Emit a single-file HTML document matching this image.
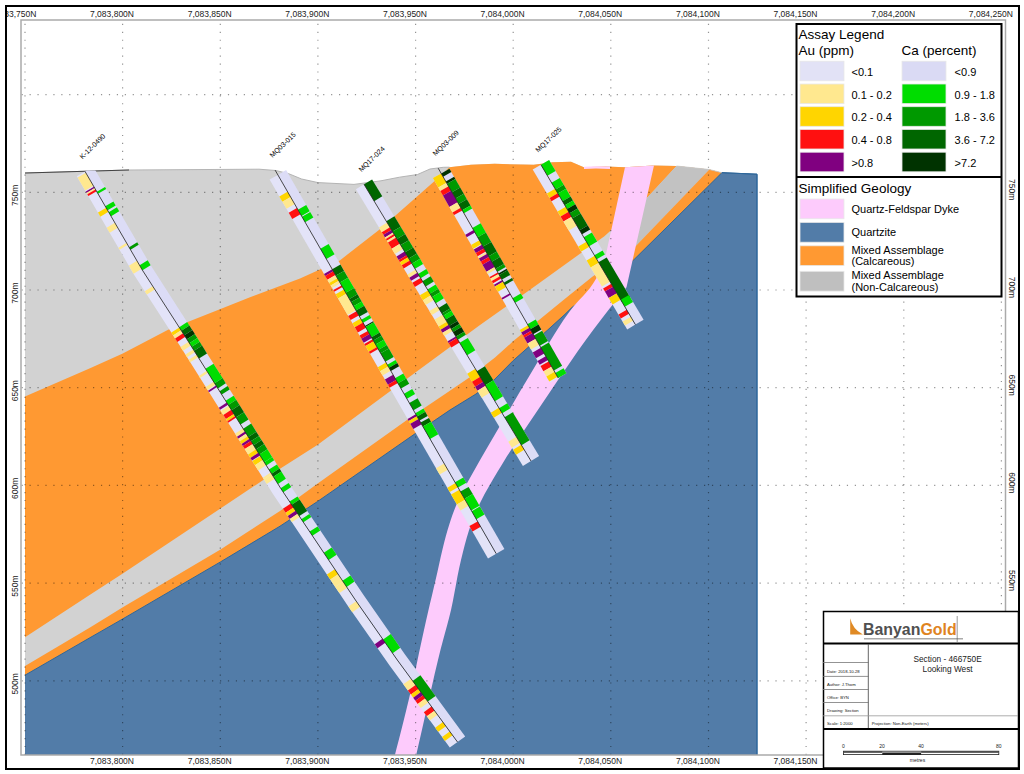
<!DOCTYPE html><html><head><meta charset="utf-8"><style>html,body{margin:0;padding:0;background:#fff;width:1024px;height:774px;overflow:hidden}svg{display:block}text{font-family:"Liberation Sans", sans-serif}</style></head><body>
<svg width="1024" height="774" viewBox="0 0 1024 774">
<rect width="1024" height="774" fill="#fff"/>
<polygon points="25.0,173.0 129.0,170.0 259.0,169.2 275.8,170.5 288.7,173.7 301.6,179.0 318.0,182.6 354.0,184.4 381.0,180.8 399.5,177.2 417.5,174.5 430.0,169.0 443.3,167.3 449.4,167.2 471.0,164.8 494.7,163.8 533.8,164.8 552.5,162.2 571.0,161.7 583.8,167.2 605.5,166.4 625.0,167.2 653.0,165.6 676.5,166.0 709.4,169.5 721.9,172.7 757.0,174.2 757.0,755.0 25.0,755.0" fill="#d2d2d2"/>
<polygon points="25.0,396.5 90.0,368.3 122.8,353.4 168.1,329.7 220.5,308.9 250.0,297.2 300.0,278.4 339.8,260.4 379.6,229.6 433.8,181.7 449.4,167.2 471.0,164.8 494.7,163.8 533.8,164.8 552.5,162.2 571.0,161.7 583.8,167.2 605.5,166.4 625.0,167.2 653.0,165.6 676.5,166.0 709.4,169.5 721.9,172.7 757.0,174.2 757.0,755.0 25.0,755.0" fill="#ff9932"/>
<polygon points="25.0,637.2 90.0,594.7 122.8,573.6 280.0,468.8 317.7,444.8 415.4,372.6 480.0,325.0 530.0,289.7 604.4,236.2 647.8,197.0 676.5,166.0 709.4,169.5 721.9,172.7 757.0,174.2 757.0,755.0 25.0,755.0" fill="#d2d2d2"/>
<polygon points="635.0,205.0 647.8,197.0 676.5,166.0 709.4,169.5 636.1,245.8 625.0,250.0" fill="#c2c2c2"/>
<polygon points="25.0,666.1 90.0,627.5 122.8,607.2 220.5,549.4 280.0,511.0 317.7,483.6 415.4,414.0 443.6,395.0 469.0,377.7 495.0,357.6 513.3,341.1 539.0,320.0 565.0,298.8 592.0,277.0 636.1,245.8 709.4,169.5 721.9,172.7 757.0,174.2 757.0,755.0 25.0,755.0" fill="#ff9932"/>
<polygon points="25.0,675.2 90.0,637.7 122.8,618.9 220.5,561.9 280.0,526.2 317.7,501.4 415.4,433.5 450.0,410.0 476.0,394.0 494.0,380.0 513.3,360.5 529.1,346.5 547.7,330.0 565.0,314.3 571.9,307.5 632.7,260.9 721.9,172.7 757.0,174.2 757.0,755.0 25.0,755.0" fill="#527ca8"/>
<polyline points="25.0,675.2 90.0,637.7 122.8,618.9 220.5,561.9 280.0,526.2 317.7,501.4 415.4,433.5 450.0,410.0 476.0,394.0 494.0,380.0 513.3,360.5 529.1,346.5 547.7,330.0 565.0,314.3 571.9,307.5 632.7,260.9 721.9,172.7 757.0,174.2 757.0,755.0" fill="none" stroke="#2d679c" stroke-width="1"/>
<polygon points="625.0,167.2 603.4,266.0 603.4,266.0 602.1,268.3 600.4,271.3 598.4,275.0 595.9,279.1 593.1,283.5 590.0,288.0 586.6,292.1 583.1,295.9 579.2,299.9 574.7,304.9 569.6,311.4 563.5,320.0 556.1,331.5 547.5,345.4 538.2,360.9 528.7,377.0 519.4,392.6 511.0,406.9 503.1,420.4 495.2,433.9 487.6,447.0 480.5,459.2 474.3,470.2 469.1,479.4 465.2,486.4 462.6,491.3 460.7,494.9 459.2,498.0 457.9,501.2 456.2,505.3 454.3,510.0 452.5,514.8 450.8,519.7 449.2,524.8 447.5,530.3 445.8,536.3 444.1,542.8 442.4,549.8 440.7,557.1 439.0,564.7 437.3,572.4 435.5,580.2 433.7,587.9 431.9,595.7 430.0,603.5 428.1,611.8 426.1,620.5 424.0,630.0 421.7,640.5 419.2,652.0 416.7,664.0 414.1,676.1 411.5,687.8 409.0,698.8 406.4,709.5 403.7,720.5 401.0,731.2 398.5,740.9 396.4,749.0 394.9,755.0 416.2,755.0 418.7,744.1 422.2,728.7 426.3,710.6 430.6,691.9 434.6,674.3 438.0,660.0 440.7,649.1 443.1,640.0 445.2,632.2 447.2,625.0 449.1,617.8 451.0,610.0 452.8,601.6 454.4,593.1 456.0,584.6 457.5,576.3 459.2,568.0 461.0,560.0 462.9,552.3 464.8,544.8 466.8,537.4 469.0,530.2 471.5,522.9 474.3,515.6 477.5,508.3 480.9,501.2 484.6,494.1 488.6,486.9 492.9,479.5 497.5,471.7 502.3,463.9 507.1,456.1 512.3,448.1 518.0,439.6 524.2,430.3 531.1,420.0 539.2,408.0 548.3,394.4 558.0,380.1 567.8,365.7 577.2,352.1 585.8,340.0 593.9,329.0 601.9,318.4 609.6,308.6 616.5,299.9 622.2,292.6 626.5,287.2 654.0,165.6" fill="#fdcbfc"/>
<polyline points="25.0,173.0 129.0,170.0 259.0,169.2 275.8,170.5 288.7,173.7 301.6,179.0 318.0,182.6 354.0,184.4 381.0,180.8 399.5,177.2 417.5,174.5 430.0,169.0 443.3,167.3 449.4,167.2" fill="none" stroke="#b4b4b4" stroke-width="1"/>
<polyline points="676.5,166.0 709.4,169.5 721.9,172.7" fill="none" stroke="#c8c8c8" stroke-width="0.8"/>
<polyline points="721.9,172.7 757,174.2 757,755" fill="none" stroke="#2d679c" stroke-width="1"/>
<polygon points="584,166.8 596,166.2 610,166.6 610,169 596,168.6 584,169" fill="#ffd2fb"/>
<line x1="25.0" y1="23.8" x2="25.0" y2="755" stroke="#000" stroke-opacity="0.42" stroke-width="1.2" stroke-dasharray="1.2 6.735"/>
<line x1="122.6" y1="23.8" x2="122.6" y2="755" stroke="#000" stroke-opacity="0.42" stroke-width="1.2" stroke-dasharray="1.2 6.735"/>
<line x1="220.3" y1="23.8" x2="220.3" y2="755" stroke="#000" stroke-opacity="0.42" stroke-width="1.2" stroke-dasharray="1.2 6.735"/>
<line x1="317.9" y1="23.8" x2="317.9" y2="755" stroke="#000" stroke-opacity="0.42" stroke-width="1.2" stroke-dasharray="1.2 6.735"/>
<line x1="415.6" y1="23.8" x2="415.6" y2="755" stroke="#000" stroke-opacity="0.42" stroke-width="1.2" stroke-dasharray="1.2 6.735"/>
<line x1="513.2" y1="23.8" x2="513.2" y2="755" stroke="#000" stroke-opacity="0.42" stroke-width="1.2" stroke-dasharray="1.2 6.735"/>
<line x1="610.8" y1="23.8" x2="610.8" y2="755" stroke="#000" stroke-opacity="0.42" stroke-width="1.2" stroke-dasharray="1.2 6.735"/>
<line x1="708.5" y1="23.8" x2="708.5" y2="755" stroke="#000" stroke-opacity="0.42" stroke-width="1.2" stroke-dasharray="1.2 6.735"/>
<line x1="806.1" y1="23.8" x2="806.1" y2="755" stroke="#000" stroke-opacity="0.42" stroke-width="1.2" stroke-dasharray="1.2 6.735"/>
<line x1="903.8" y1="23.8" x2="903.8" y2="755" stroke="#000" stroke-opacity="0.42" stroke-width="1.2" stroke-dasharray="1.2 6.735"/>
<line x1="1001.4" y1="23.8" x2="1001.4" y2="755" stroke="#000" stroke-opacity="0.42" stroke-width="1.2" stroke-dasharray="1.2 6.735"/>
<line x1="21.6" y1="680.8" x2="1005" y2="680.8" stroke="#000" stroke-opacity="0.42" stroke-width="1.2" stroke-dasharray="1.2 6.735"/>
<line x1="21.6" y1="583.1" x2="1005" y2="583.1" stroke="#000" stroke-opacity="0.42" stroke-width="1.2" stroke-dasharray="1.2 6.735"/>
<line x1="21.6" y1="485.4" x2="1005" y2="485.4" stroke="#000" stroke-opacity="0.42" stroke-width="1.2" stroke-dasharray="1.2 6.735"/>
<line x1="21.6" y1="387.7" x2="1005" y2="387.7" stroke="#000" stroke-opacity="0.42" stroke-width="1.2" stroke-dasharray="1.2 6.735"/>
<line x1="21.6" y1="290.0" x2="1005" y2="290.0" stroke="#000" stroke-opacity="0.42" stroke-width="1.2" stroke-dasharray="1.2 6.735"/>
<line x1="21.6" y1="192.3" x2="1005" y2="192.3" stroke="#000" stroke-opacity="0.42" stroke-width="1.2" stroke-dasharray="1.2 6.735"/>
<line x1="21.6" y1="94.6" x2="1005" y2="94.6" stroke="#000" stroke-opacity="0.42" stroke-width="1.2" stroke-dasharray="1.2 6.735"/>
<polyline points="25,173 129,170" fill="none" stroke="#444" stroke-width="1.2"/>
<defs><clipPath id="k12c"><rect x="0" y="170.6" width="1024" height="600"/></clipPath></defs>
<g clip-path="url(#k12c)">
<polygon points="85.0,171.4 142.3,270.0 187.4,340.0 280.8,488.5 355.4,600.0 397.3,660.0 457.5,742.0 449.8,747.6 389.6,665.5 347.6,605.4 272.8,493.7 179.4,345.1 134.2,275.0 76.8,176.2" fill="#e3e3f8"/>
<polygon points="85.0,171.4 142.3,270.0 187.4,340.0 280.8,488.5 355.4,600.0 397.3,660.0 457.5,742.0 465.2,736.4 405.0,654.5 363.2,594.6 288.8,483.3 195.4,334.9 150.5,265.0 93.2,166.6" fill="#dcdcf6"/>
<polygon points="85.8,172.8 93.4,185.8 85.2,190.6 77.6,177.6" fill="#ffe88f"/>
<polygon points="94.0,186.8 94.7,188.1 86.5,192.9 85.8,191.6" fill="#800080"/>
<polygon points="94.7,188.1 95.5,189.4 87.3,194.2 86.5,192.9" fill="#ffe88f"/>
<polygon points="95.5,189.4 96.6,191.3 88.4,196.1 87.3,194.2" fill="#ff1010"/>
<polygon points="106.2,207.8 108.5,211.8 100.3,216.7 98.0,212.6" fill="#ffd500"/>
<polygon points="114.9,222.8 117.8,227.8 109.7,232.7 106.7,227.7" fill="#ffe88f"/>
<polygon points="126.5,242.8 127.7,244.8 119.6,249.7 118.4,247.7" fill="#ffe88f"/>
<polygon points="137.0,260.8 141.7,268.8 133.5,273.8 128.9,265.7" fill="#ffe88f"/>
<polygon points="152.8,286.2 154.8,289.4 146.8,294.4 144.7,291.2" fill="#ffe88f"/>
<polygon points="179.4,327.5 181.2,330.3 173.1,335.4 171.3,332.6" fill="#ffd500"/>
<polygon points="181.2,330.3 183.1,333.3 175.1,338.4 173.1,335.4" fill="#ffe88f"/>
<polygon points="183.1,333.3 185.3,336.8 177.3,341.9 175.1,338.4" fill="#ff1010"/>
<polygon points="188.5,341.8 190.9,345.6 182.9,350.7 180.5,346.9" fill="#ffe88f"/>
<polygon points="193.4,349.5 195.0,352.1 187.0,357.2 185.4,354.6" fill="#ffe88f"/>
<polygon points="196.6,354.7 198.2,357.2 190.2,362.3 188.6,359.8" fill="#ffe88f"/>
<polygon points="206.8,370.8 208.0,372.8 200.0,377.9 198.8,375.9" fill="#ffe88f"/>
<polygon points="213.7,381.8 215.6,384.8 207.6,389.9 205.7,386.9" fill="#ffe88f"/>
<polygon points="216.1,385.6 217.0,387.1 209.0,392.2 208.1,390.7" fill="#800080"/>
<polygon points="226.8,402.6 228.1,404.7 220.1,409.8 218.8,407.7" fill="#800080"/>
<polygon points="228.8,405.8 231.3,409.8 223.3,414.9 220.8,410.9" fill="#ffe88f"/>
<polygon points="231.3,409.8 233.9,414.0 226.0,419.1 223.3,414.9" fill="#ff1010"/>
<polygon points="233.9,414.0 235.3,416.1 227.3,421.2 226.0,419.1" fill="#ffd500"/>
<polygon points="235.3,416.1 236.2,417.6 228.2,422.7 227.3,421.2" fill="#ff1010"/>
<polygon points="243.1,428.5 245.0,431.6 237.0,436.7 235.1,433.6" fill="#ffe88f"/>
<polygon points="245.0,431.6 246.3,433.6 238.3,438.7 237.0,436.7" fill="#800080"/>
<polygon points="246.3,433.6 247.9,436.2 239.9,441.3 238.3,438.7" fill="#ffe88f"/>
<polygon points="247.9,436.2 249.5,438.8 241.6,443.9 239.9,441.3" fill="#ffd500"/>
<polygon points="249.5,438.8 250.9,440.9 242.9,446.0 241.6,443.9" fill="#800080"/>
<polygon points="250.9,440.9 252.8,444.0 244.8,449.1 242.9,446.0" fill="#ff1010"/>
<polygon points="252.8,444.0 256.1,449.2 248.1,454.4 244.8,449.1" fill="#ffe88f"/>
<polygon points="256.1,449.2 258.3,452.8 250.4,458.0 248.1,454.4" fill="#ffd500"/>
<polygon points="258.3,452.8 260.0,455.4 252.0,460.6 250.4,458.0" fill="#800080"/>
<polygon points="260.3,455.9 262.9,460.1 255.0,465.3 252.3,461.1" fill="#ffd500"/>
<polygon points="262.9,460.1 266.1,465.2 258.2,470.4 255.0,465.3" fill="#ffe88f"/>
<polygon points="270.7,472.5 271.7,474.0 263.7,479.2 262.8,477.7" fill="#ffe88f"/>
<polygon points="271.7,474.0 274.6,478.7 266.7,483.9 263.7,479.2" fill="#ffe88f"/>
<polygon points="290.8,503.5 293.6,507.6 285.6,512.8 282.9,508.7" fill="#ff1010"/>
<polygon points="293.6,507.6 295.7,510.7 287.7,515.9 285.6,512.8" fill="#ffd500"/>
<polygon points="295.7,510.7 297.7,513.8 289.8,519.0 287.7,515.9" fill="#800080"/>
<polygon points="297.7,513.8 299.8,516.9 291.9,522.1 289.8,519.0" fill="#ffe88f"/>
<polygon points="334.8,569.2 338.2,574.3 330.3,579.6 326.9,574.5" fill="#ffd500"/>
<polygon points="338.2,574.3 343.1,581.6 335.2,586.9 330.3,579.6" fill="#ffe88f"/>
<polygon points="343.1,581.6 347.2,587.8 339.4,593.1 335.2,586.9" fill="#ffe88f"/>
<polygon points="356.2,601.2 360.1,606.8 352.3,612.2 348.4,606.6" fill="#ffe88f"/>
<polygon points="382.4,638.7 385.3,642.8 377.5,648.3 374.7,644.2" fill="#800080"/>
<polygon points="411.0,678.7 415.6,684.9 407.9,690.5 403.3,684.3" fill="#ffe88f"/>
<polygon points="415.6,684.9 418.6,689.0 410.9,694.6 407.9,690.5" fill="#ff1010"/>
<polygon points="418.6,689.0 420.9,692.1 413.2,697.7 410.9,694.6" fill="#ffd500"/>
<polygon points="420.9,692.1 423.1,695.2 415.4,700.8 413.2,697.7" fill="#800080"/>
<polygon points="423.1,695.2 425.4,698.3 417.7,703.9 415.4,700.8" fill="#ff1010"/>
<polygon points="425.4,698.3 428.4,702.4 420.7,708.0 417.7,703.9" fill="#ffe88f"/>
<polygon points="431.5,706.6 434.5,710.7 426.8,716.3 423.8,712.2" fill="#ff1010"/>
<polygon points="434.5,710.7 437.5,714.8 429.9,720.4 426.8,716.3" fill="#ffe88f"/>
<polygon points="442.9,722.1 445.9,726.2 438.2,731.8 435.2,727.7" fill="#ffd500"/>
<polygon points="449.7,731.4 452.6,735.3 444.9,740.9 442.1,737.0" fill="#ffd500"/>
<polygon points="96.8,191.7 98.0,193.7 106.2,188.9 105.0,186.9" fill="#00dd00"/>
<polygon points="105.2,206.2 107.6,210.2 115.7,205.4 113.4,201.4" fill="#00dd00"/>
<polygon points="108.7,212.2 111.1,216.2 119.2,211.3 116.9,207.3" fill="#00dd00"/>
<polygon points="129.1,247.2 130.5,249.7 138.7,244.8 137.2,242.3" fill="#009900"/>
<polygon points="139.6,265.2 142.3,270.0 142.5,270.2 150.6,265.2 150.5,265.0 147.7,260.2" fill="#00dd00"/>
<polygon points="179.2,327.2 181.4,330.7 189.4,325.6 187.2,322.1" fill="#00dd00"/>
<polygon points="181.4,330.7 184.3,335.2 192.3,330.1 189.4,325.6" fill="#006600"/>
<polygon points="184.3,335.2 186.9,339.2 194.9,334.1 192.3,330.1" fill="#003300"/>
<polygon points="186.9,339.2 187.4,340.0 189.4,343.2 197.4,338.1 195.4,334.9 194.9,334.1" fill="#009900"/>
<polygon points="189.4,343.2 191.7,346.8 199.7,341.7 197.4,338.1" fill="#00dd00"/>
<polygon points="191.7,346.8 194.1,350.7 202.1,345.6 199.7,341.7" fill="#009900"/>
<polygon points="194.1,350.7 199.0,358.5 207.0,353.4 202.1,345.6" fill="#006600"/>
<polygon points="205.5,368.8 214.6,383.2 222.6,378.1 213.5,363.7" fill="#00dd00"/>
<polygon points="214.6,383.2 217.8,388.4 225.8,383.3 222.6,378.1" fill="#009900"/>
<polygon points="219.6,391.2 221.7,394.6 229.7,389.5 227.6,386.1" fill="#009900"/>
<polygon points="225.6,400.8 228.2,404.9 236.2,399.8 233.6,395.7" fill="#00dd00"/>
<polygon points="228.2,404.9 231.6,410.2 239.5,405.1 236.2,399.8" fill="#009900"/>
<polygon points="231.6,410.2 236.0,417.3 244.0,412.2 239.5,405.1" fill="#006600"/>
<polygon points="236.0,417.3 240.5,424.5 248.5,419.4 244.0,412.2" fill="#009900"/>
<polygon points="243.2,428.7 248.3,436.9 256.3,431.8 251.2,423.6" fill="#009900"/>
<polygon points="248.3,436.9 251.0,441.1 259.0,436.0 256.3,431.8" fill="#006600"/>
<polygon points="251.0,441.1 253.6,445.2 261.5,440.0 259.0,436.0" fill="#009900"/>
<polygon points="253.6,445.2 256.1,449.3 264.1,444.1 261.5,440.0" fill="#006600"/>
<polygon points="256.1,449.3 259.4,454.5 267.4,449.3 264.1,444.1" fill="#009900"/>
<polygon points="259.4,454.5 264.3,462.2 272.2,457.0 267.4,449.3" fill="#00dd00"/>
<polygon points="264.3,462.2 266.3,465.4 274.2,460.2 272.2,457.0" fill="#00dd00"/>
<polygon points="268.9,469.6 271.5,473.7 279.5,468.5 276.9,464.4" fill="#00dd00"/>
<polygon points="271.5,473.7 273.4,476.8 281.4,471.6 279.5,468.5" fill="#006600"/>
<polygon points="273.4,476.8 278.0,484.0 285.9,478.8 281.4,471.6" fill="#00dd00"/>
<polygon points="280.6,488.2 280.8,488.5 283.3,492.3 291.3,487.1 288.8,483.3 288.6,483.0" fill="#00dd00"/>
<polygon points="289.6,501.6 291.6,504.7 299.6,499.5 297.5,496.4" fill="#00dd00"/>
<polygon points="291.6,504.7 299.3,516.1 307.2,510.9 299.6,499.5" fill="#006600"/>
<polygon points="301.3,519.2 303.4,522.3 311.3,517.1 309.3,514.0" fill="#00dd00"/>
<polygon points="309.6,531.6 312.4,535.7 320.3,530.4 317.6,526.4" fill="#00dd00"/>
<polygon points="323.8,552.8 328.7,560.1 336.6,554.8 331.7,547.5" fill="#00dd00"/>
<polygon points="342.5,580.7 346.6,586.9 354.5,581.6 350.4,575.4" fill="#00dd00"/>
<polygon points="383.1,639.6 392.6,653.2 400.3,647.7 390.8,634.1" fill="#00dd00"/>
<polygon points="412.6,680.9 427.8,701.6 435.5,696.0 420.4,675.3" fill="#009900"/>
<polyline points="85.0,171.4 142.3,270.0 187.4,340.0 280.8,488.5 355.4,600.0 397.3,660.0 457.5,742.0" fill="none" stroke="#222" stroke-width="0.8"/>
</g>
<text x="0" y="0" font-size="7" transform="translate(82.4,159.4) rotate(-44)">K-12-0490</text>
<polygon points="277.8,174.9 496.2,553.7 488.0,558.4 269.6,179.6" fill="#e3e3f8"/>
<polygon points="277.8,174.9 496.2,553.7 504.4,549.0 286.1,170.1" fill="#dcdcf6"/>
<polygon points="287.5,191.7 290.7,197.1 282.4,201.8 279.3,196.4" fill="#ffd500"/>
<polygon points="290.7,197.1 294.7,204.1 286.5,208.8 282.4,201.8" fill="#ffe88f"/>
<polygon points="296.9,208.0 300.5,214.2 292.3,218.9 288.7,212.7" fill="#ff1010"/>
<polygon points="332.2,269.2 333.4,271.2 325.1,275.9 324.0,273.9" fill="#800080"/>
<polygon points="333.4,271.2 335.6,275.1 327.4,279.8 325.1,275.9" fill="#ff1010"/>
<polygon points="335.6,275.1 337.4,278.2 329.2,282.9 327.4,279.8" fill="#ffe88f"/>
<polygon points="337.4,278.2 338.9,280.8 330.7,285.5 329.2,282.9" fill="#ffd500"/>
<polygon points="338.9,280.8 340.3,283.3 332.1,288.0 330.7,285.5" fill="#ffe88f"/>
<polygon points="341.6,285.4 342.5,287.0 334.2,291.7 333.3,290.1" fill="#ff1010"/>
<polygon points="343.9,289.5 346.3,293.7 338.1,298.4 335.7,294.2" fill="#ffd500"/>
<polygon points="346.3,293.7 355.9,310.2 347.6,314.9 338.1,298.4" fill="#ffe88f"/>
<polygon points="356.4,311.2 358.8,315.4 350.6,320.1 348.2,315.9" fill="#ff1010"/>
<polygon points="360.6,318.5 363.0,322.6 354.8,327.3 352.4,323.2" fill="#ffd500"/>
<polygon points="363.0,322.6 366.0,327.8 357.8,332.5 354.8,327.3" fill="#ff1010"/>
<polygon points="367.8,330.9 369.6,334.0 361.3,338.7 359.6,335.6" fill="#ff1010"/>
<polygon points="369.6,334.0 371.9,338.1 363.7,342.8 361.3,338.7" fill="#800080"/>
<polygon points="372.6,339.2 373.7,341.2 365.5,345.9 364.3,343.9" fill="#ff1010"/>
<polygon points="373.7,341.2 377.1,347.0 368.8,351.7 365.5,345.9" fill="#ffd500"/>
<polygon points="377.1,347.0 378.2,349.0 370.0,353.7 368.8,351.7" fill="#ff1010"/>
<polygon points="386.0,362.5 388.4,366.6 380.1,371.3 377.8,367.2" fill="#ffd500"/>
<polygon points="388.4,366.6 390.7,370.7 382.5,375.4 380.1,371.3" fill="#ffe88f"/>
<polygon points="393.1,374.8 396.1,380.0 387.9,384.7 384.9,379.5" fill="#800080"/>
<polygon points="396.1,380.0 397.9,383.1 389.6,387.8 387.9,384.7" fill="#ff1010"/>
<polygon points="415.8,414.2 416.9,416.2 408.7,420.9 407.6,418.9" fill="#800080"/>
<polygon points="416.9,416.2 418.6,419.0 410.3,423.7 408.7,420.9" fill="#ffd500"/>
<polygon points="418.6,419.0 421.6,424.2 413.3,428.9 410.3,423.7" fill="#800080"/>
<polygon points="444.2,463.5 447.8,469.7 439.6,474.4 436.0,468.2" fill="#ffe88f"/>
<polygon points="455.5,483.1 457.9,487.3 449.7,492.0 447.3,487.8" fill="#ffd500"/>
<polygon points="459.4,489.8 465.1,499.8 456.9,504.5 451.1,494.5" fill="#ffd500"/>
<polygon points="465.1,499.8 468.6,505.8 460.4,510.5 456.9,504.5" fill="#ffe88f"/>
<polygon points="477.6,521.4 480.7,526.8 472.5,531.5 469.4,526.1" fill="#ff1010"/>
<polygon points="297.9,209.7 301.5,215.9 309.7,211.2 306.2,205.0" fill="#00dd00"/>
<polygon points="302.0,216.7 305.1,222.2 313.4,217.5 310.2,212.0" fill="#00dd00"/>
<polygon points="320.4,248.7 326.3,259.0 334.6,254.3 328.6,244.0" fill="#00dd00"/>
<polygon points="332.2,269.2 335.9,275.6 344.1,270.9 340.5,264.5" fill="#006600"/>
<polygon points="335.9,275.6 339.9,282.5 348.1,277.8 344.1,270.9" fill="#009900"/>
<polygon points="339.9,282.5 345.8,292.8 354.1,288.1 348.1,277.8" fill="#00dd00"/>
<polygon points="345.8,292.8 349.4,299.0 357.6,294.3 354.1,288.1" fill="#009900"/>
<polygon points="349.4,299.0 351.2,302.1 359.4,297.4 357.6,294.3" fill="#006600"/>
<polygon points="351.2,302.1 353.5,306.2 361.8,301.5 359.4,297.4" fill="#009900"/>
<polygon points="353.5,306.2 356.0,310.4 364.2,305.7 361.8,301.5" fill="#00dd00"/>
<polygon points="356.0,310.4 359.5,316.6 367.8,311.9 364.2,305.7" fill="#006600"/>
<polygon points="361.3,319.7 363.1,322.8 371.3,318.1 369.6,315.0" fill="#00dd00"/>
<polygon points="364.9,325.9 365.5,326.9 373.7,322.2 373.1,321.2" fill="#003300"/>
<polygon points="365.5,326.9 371.5,337.3 379.7,332.6 373.7,322.2" fill="#00dd00"/>
<polygon points="371.5,337.3 373.3,340.4 381.5,335.7 379.7,332.6" fill="#006600"/>
<polygon points="373.3,340.4 375.6,344.5 383.9,339.8 381.5,335.7" fill="#009900"/>
<polygon points="375.6,344.5 378.6,349.7 386.8,345.0 383.9,339.8" fill="#00dd00"/>
<polygon points="378.6,349.7 380.6,353.2 388.9,348.5 386.8,345.0" fill="#009900"/>
<polygon points="380.6,353.2 385.5,361.6 393.7,356.9 388.9,348.5" fill="#009900"/>
<polygon points="387.3,364.7 389.1,367.8 397.3,363.1 395.5,360.0" fill="#00dd00"/>
<polygon points="389.1,367.8 390.8,370.9 399.1,366.2 397.3,363.1" fill="#003300"/>
<polygon points="395.0,378.2 398.0,383.3 406.2,378.6 403.3,373.5" fill="#00dd00"/>
<polygon points="398.0,383.3 401.0,388.5 409.2,383.8 406.2,378.6" fill="#009900"/>
<polygon points="404.0,393.7 406.9,398.8 415.1,394.1 412.2,389.0" fill="#00dd00"/>
<polygon points="409.3,403.0 413.5,410.2 421.7,405.5 417.6,398.3" fill="#009900"/>
<polygon points="415.3,413.3 417.1,416.4 425.3,411.7 423.5,408.6" fill="#00dd00"/>
<polygon points="417.1,416.4 419.5,420.6 427.7,415.9 425.3,411.7" fill="#006600"/>
<polygon points="420.6,422.6 422.9,426.5 431.1,421.8 428.9,417.9" fill="#006600"/>
<polygon points="422.9,426.5 430.0,438.9 438.3,434.2 431.1,421.8" fill="#00dd00"/>
<polygon points="455.0,482.3 458.0,487.5 466.3,482.8 463.3,477.6" fill="#00dd00"/>
<polygon points="460.4,491.6 464.6,498.8 472.8,494.1 468.6,486.9" fill="#009900"/>
<polygon points="464.6,498.8 471.2,510.4 479.5,505.7 472.8,494.1" fill="#00dd00"/>
<polygon points="471.7,511.2 476.3,519.2 484.5,514.5 479.9,506.5" fill="#00dd00"/>
<polyline points="275.1,170.1 496.2,553.7" fill="none" stroke="#222" stroke-width="0.8"/>
<text x="0" y="0" font-size="7" transform="translate(272.5,158.1) rotate(-44)">MQ03-015</text>
<polygon points="364.0,184.3 531.0,461.0 522.9,465.9 355.9,189.2" fill="#e3e3f8"/>
<polygon points="364.0,184.3 531.0,461.0 539.1,456.1 372.1,179.4" fill="#dcdcf6"/>
<polygon points="387.1,222.6 390.0,227.3 381.8,232.2 379.0,227.5" fill="#ffe88f"/>
<polygon points="390.0,227.3 391.5,229.9 383.4,234.8 381.8,232.2" fill="#ff1010"/>
<polygon points="391.5,229.9 393.1,232.5 385.0,237.4 383.4,234.8" fill="#800080"/>
<polygon points="393.1,232.5 394.0,234.0 385.9,238.9 385.0,237.4" fill="#ffe88f"/>
<polygon points="394.0,234.0 395.1,235.8 386.9,240.7 385.9,238.9" fill="#ff1010"/>
<polygon points="395.1,235.8 396.2,237.6 388.0,242.5 386.9,240.7" fill="#ffe88f"/>
<polygon points="396.2,237.6 399.9,243.8 391.8,248.7 388.0,242.5" fill="#ff1010"/>
<polygon points="399.9,243.8 403.0,249.0 394.9,253.9 391.8,248.7" fill="#ffe88f"/>
<polygon points="404.6,251.6 406.8,255.2 398.7,260.1 396.5,256.5" fill="#800080"/>
<polygon points="406.8,255.2 408.1,257.3 399.9,262.2 398.7,260.1" fill="#ff1010"/>
<polygon points="408.1,257.3 409.9,260.4 401.8,265.3 399.9,262.2" fill="#ffd500"/>
<polygon points="409.9,260.4 411.8,263.5 403.7,268.4 401.8,265.3" fill="#ff1010"/>
<polygon points="415.5,269.7 417.4,272.8 409.3,277.7 407.4,274.6" fill="#ffe88f"/>
<polygon points="417.4,272.8 419.3,275.9 411.2,280.8 409.3,277.7" fill="#800080"/>
<polygon points="420.5,277.9 423.0,282.1 414.9,287.0 412.4,282.8" fill="#ff1010"/>
<polygon points="428.0,290.4 431.0,295.3 422.9,300.2 419.9,295.3" fill="#ffd500"/>
<polygon points="431.0,295.3 433.8,300.0 425.7,304.9 422.9,300.2" fill="#ffe88f"/>
<polygon points="437.6,306.2 439.9,310.1 431.8,315.0 429.4,311.1" fill="#ffe88f"/>
<polygon points="442.7,314.7 446.9,321.7 438.8,326.6 434.6,319.6" fill="#ffe88f"/>
<polygon points="446.9,321.7 448.8,324.8 440.7,329.7 438.8,326.6" fill="#ffd500"/>
<polygon points="448.8,324.8 450.7,327.9 442.5,332.8 440.7,329.7" fill="#800080"/>
<polygon points="450.7,327.9 452.5,331.0 444.4,335.9 442.5,332.8" fill="#ffe88f"/>
<polygon points="455.8,336.4 456.8,338.0 448.6,342.9 447.7,341.3" fill="#800080"/>
<polygon points="456.8,338.0 459.5,342.6 451.4,347.5 448.6,342.9" fill="#ff1010"/>
<polygon points="475.4,368.8 480.2,376.8 472.0,381.7 467.2,373.7" fill="#ffd500"/>
<polygon points="480.2,376.8 483.2,381.8 475.1,386.7 472.0,381.7" fill="#ff1010"/>
<polygon points="483.2,381.8 485.6,385.8 477.5,390.7 475.1,386.7" fill="#800080"/>
<polygon points="485.6,385.8 489.8,392.8 481.7,397.7 477.5,390.7" fill="#ffe88f"/>
<polygon points="498.9,407.8 501.9,412.8 493.8,417.7 490.8,412.7" fill="#ffd500"/>
<polygon points="516.4,436.8 520.0,442.8 511.9,447.7 508.3,441.7" fill="#ffe88f"/>
<polygon points="521.2,444.8 524.2,449.8 516.1,454.7 513.1,449.7" fill="#ffd500"/>
<polygon points="364.0,184.3 374.2,201.2 382.3,196.3 372.1,179.4" fill="#006600"/>
<polygon points="386.3,221.2 392.5,231.6 400.7,226.7 394.4,216.3" fill="#006600"/>
<polygon points="392.5,231.6 397.0,238.9 405.1,234.0 400.7,226.7" fill="#009900"/>
<polygon points="397.0,238.9 400.7,245.1 408.8,240.2 405.1,234.0" fill="#006600"/>
<polygon points="400.7,245.1 405.0,252.3 413.2,247.4 408.8,240.2" fill="#009900"/>
<polygon points="405.0,252.3 408.8,258.5 416.9,253.6 413.2,247.4" fill="#006600"/>
<polygon points="408.8,258.5 411.9,263.7 420.1,258.8 416.9,253.6" fill="#009900"/>
<polygon points="411.9,263.7 415.0,268.8 423.1,263.9 420.1,258.8" fill="#00dd00"/>
<polygon points="418.1,274.0 420.7,278.2 428.8,273.3 426.3,269.1" fill="#00dd00"/>
<polygon points="422.5,281.2 425.6,286.4 433.8,281.5 430.6,276.3" fill="#009900"/>
<polygon points="427.5,289.5 430.0,293.7 438.2,288.8 435.6,284.6" fill="#00dd00"/>
<polygon points="430.0,293.7 432.1,297.1 440.2,292.2 438.2,288.8" fill="#009900"/>
<polygon points="432.1,297.1 435.8,303.2 443.9,298.3 440.2,292.2" fill="#00dd00"/>
<polygon points="438.6,307.9 441.9,313.4 450.1,308.5 446.7,303.0" fill="#006600"/>
<polygon points="441.9,313.4 443.3,315.7 451.4,310.8 450.1,308.5" fill="#009900"/>
<polygon points="443.3,315.7 445.7,319.6 453.8,314.7 451.4,310.8" fill="#00dd00"/>
<polygon points="445.7,319.6 449.4,325.8 457.5,320.9 453.8,314.7" fill="#006600"/>
<polygon points="449.4,325.8 451.3,328.9 459.4,324.0 457.5,320.9" fill="#003300"/>
<polygon points="451.3,328.9 453.1,332.0 461.3,327.1 459.4,324.0" fill="#009900"/>
<polygon points="453.1,332.0 455.9,336.6 464.1,331.7 461.3,327.1" fill="#003300"/>
<polygon points="455.9,336.6 457.8,339.7 465.9,334.8 464.1,331.7" fill="#009900"/>
<polygon points="459.7,342.8 467.1,355.2 475.3,350.3 467.8,337.9" fill="#00dd00"/>
<polygon points="476.8,371.2 485.3,385.2 493.4,380.3 484.9,366.3" fill="#006600"/>
<polygon points="485.3,385.2 494.9,401.2 503.0,396.3 493.4,380.3" fill="#00dd00"/>
<polygon points="499.1,408.2 502.2,413.2 510.3,408.3 507.3,403.3" fill="#00dd00"/>
<polygon points="504.6,417.2 521.5,445.2 529.6,440.3 512.7,412.3" fill="#009900"/>
<polyline points="364.0,184.3 531.0,461.0" fill="none" stroke="#222" stroke-width="0.8"/>
<text x="0" y="0" font-size="7" transform="translate(361.4,172.3) rotate(-44)">MQ17-024</text>
<polygon points="441.2,173.4 558.2,378.0 550.0,382.7 432.9,178.1" fill="#e3e3f8"/>
<polygon points="441.2,173.4 558.2,378.0 566.4,373.3 449.4,168.7" fill="#dcdcf6"/>
<polygon points="441.2,173.4 446.6,182.8 438.3,187.5 432.9,178.1" fill="#ffd500"/>
<polygon points="446.6,182.8 448.6,186.3 440.3,191.0 438.3,187.5" fill="#ffe88f"/>
<polygon points="448.6,186.3 451.1,190.8 442.9,195.5 440.3,191.0" fill="#ff1010"/>
<polygon points="451.1,190.8 457.6,202.2 449.4,206.9 442.9,195.5" fill="#800080"/>
<polygon points="457.6,202.2 460.8,207.7 452.5,212.4 449.4,206.9" fill="#ffe88f"/>
<polygon points="460.8,207.7 462.3,210.4 454.1,215.1 452.5,212.4" fill="#ff1010"/>
<polygon points="473.6,230.1 475.0,232.5 466.7,237.2 465.4,234.8" fill="#800080"/>
<polygon points="479.4,240.2 481.6,244.1 473.4,248.8 471.1,244.9" fill="#ffd500"/>
<polygon points="482.0,244.8 484.1,248.4 475.8,253.1 473.8,249.5" fill="#800080"/>
<polygon points="484.1,248.4 485.8,251.5 477.6,256.2 475.8,253.1" fill="#ff1010"/>
<polygon points="486.2,252.2 487.2,253.8 478.9,258.5 478.0,256.9" fill="#ffe88f"/>
<polygon points="487.2,253.8 488.9,256.9 480.7,261.6 478.9,258.5" fill="#800080"/>
<polygon points="488.9,256.9 490.7,260.0 482.5,264.7 480.7,261.6" fill="#ff1010"/>
<polygon points="490.7,260.0 494.7,267.0 486.5,271.7 482.5,264.7" fill="#800080"/>
<polygon points="494.7,267.0 496.0,269.3 487.8,274.0 486.5,271.7" fill="#ffe88f"/>
<polygon points="497.8,272.4 498.7,273.9 490.4,278.6 489.6,277.1" fill="#ff1010"/>
<polygon points="498.7,273.9 500.0,276.3 491.8,281.0 490.4,278.6" fill="#ffe88f"/>
<polygon points="500.0,276.3 501.3,278.6 493.1,283.3 491.8,281.0" fill="#ff1010"/>
<polygon points="502.2,280.1 503.1,281.7 494.9,286.4 494.0,284.8" fill="#800080"/>
<polygon points="503.1,281.7 506.2,287.1 498.0,291.8 494.9,286.4" fill="#ffd500"/>
<polygon points="509.8,293.3 510.6,294.8 502.4,299.5 501.5,298.0" fill="#800080"/>
<polygon points="528.0,325.2 529.5,327.8 521.2,332.5 519.8,329.9" fill="#ffd500"/>
<polygon points="529.5,327.8 531.2,330.8 523.0,335.5 521.2,332.5" fill="#800080"/>
<polygon points="531.2,330.8 532.5,333.0 524.2,337.7 523.0,335.5" fill="#ff1010"/>
<polygon points="532.5,333.0 535.8,338.8 527.5,343.5 524.2,337.7" fill="#800080"/>
<polygon points="535.8,338.8 539.2,344.8 531.0,349.5 527.5,343.5" fill="#ffe88f"/>
<polygon points="540.9,347.8 544.2,353.6 536.0,358.3 532.7,352.5" fill="#800080"/>
<polygon points="545.7,356.2 548.0,360.1 539.7,364.8 537.5,360.9" fill="#800080"/>
<polygon points="548.7,361.4 551.7,366.6 543.4,371.3 540.5,366.1" fill="#ff1010"/>
<polygon points="551.8,366.8 554.7,371.8 546.4,376.5 543.5,371.5" fill="#ffe88f"/>
<polygon points="554.7,371.8 557.5,376.8 549.3,381.5 546.4,376.5" fill="#ffd500"/>
<polygon points="441.2,173.4 443.1,176.8 451.4,172.1 449.4,168.7" fill="#003300"/>
<polygon points="445.8,181.5 447.1,183.8 455.4,179.1 454.1,176.8" fill="#003300"/>
<polygon points="447.1,183.8 452.0,192.3 460.2,187.6 455.4,179.1" fill="#009900"/>
<polygon points="452.0,192.3 455.5,198.5 463.8,193.8 460.2,187.6" fill="#006600"/>
<polygon points="455.5,198.5 458.6,203.9 466.9,199.2 463.8,193.8" fill="#009900"/>
<polygon points="458.6,203.9 462.2,210.2 470.5,205.5 466.9,199.2" fill="#006600"/>
<polygon points="462.2,210.2 463.9,213.2 472.2,208.5 470.5,205.5" fill="#00dd00"/>
<polygon points="472.4,228.0 477.7,237.2 485.9,232.5 480.7,223.3" fill="#00dd00"/>
<polygon points="477.7,237.2 483.0,246.6 491.3,241.9 485.9,232.5" fill="#009900"/>
<polygon points="483.0,246.6 488.6,256.3 496.8,251.6 491.3,241.9" fill="#006600"/>
<polygon points="488.6,256.3 491.7,261.7 499.9,257.0 496.8,251.6" fill="#009900"/>
<polygon points="491.7,261.7 495.7,268.7 503.9,264.0 499.9,257.0" fill="#006600"/>
<polygon points="495.7,268.7 497.5,271.8 505.7,267.1 503.9,264.0" fill="#009900"/>
<polygon points="498.4,273.4 499.2,274.9 507.5,270.2 506.6,268.7" fill="#003300"/>
<polygon points="499.2,274.9 501.9,279.6 510.2,274.9 507.5,270.2" fill="#006600"/>
<polygon points="503.7,282.7 505.0,285.0 513.3,280.3 511.9,278.0" fill="#006600"/>
<polygon points="512.6,298.2 515.2,302.8 523.4,298.1 520.8,293.5" fill="#00dd00"/>
<polygon points="527.4,324.2 530.3,329.2 538.5,324.5 535.7,319.5" fill="#00dd00"/>
<polygon points="530.3,329.2 533.1,334.2 541.4,329.5 538.5,324.5" fill="#003300"/>
<polygon points="533.9,335.5 539.8,345.8 548.0,341.1 542.1,330.8" fill="#009900"/>
<polygon points="540.6,347.2 553.9,370.4 562.1,365.7 548.8,342.5" fill="#009900"/>
<polygon points="555.3,373.0 558.2,378.0 566.4,373.3 563.6,368.3" fill="#00dd00"/>
<polyline points="438.2,168.2 558.2,378.0" fill="none" stroke="#222" stroke-width="0.8"/>
<text x="0" y="0" font-size="7" transform="translate(435.6,156.2) rotate(-44)">MQ03-009</text>
<polygon points="540.9,164.7 635.4,324.6 627.2,329.4 532.7,169.5" fill="#e3e3f8"/>
<polygon points="540.9,164.7 635.4,324.6 643.6,319.8 549.1,159.9" fill="#dcdcf6"/>
<polygon points="555.1,188.7 557.8,193.3 549.6,198.1 546.9,193.5" fill="#ffd500"/>
<polygon points="557.8,193.3 559.6,196.4 551.5,201.2 549.6,198.1" fill="#ff1010"/>
<polygon points="565.8,206.8 568.7,211.8 560.6,216.6 557.6,211.6" fill="#ffd500"/>
<polygon points="568.7,211.8 571.7,216.8 563.5,221.6 560.6,216.6" fill="#ff1010"/>
<polygon points="571.7,216.8 577.0,225.8 568.8,230.6 563.5,221.6" fill="#ffe88f"/>
<polygon points="586.5,241.8 589.4,246.8 581.2,251.6 578.3,246.6" fill="#ffd500"/>
<polygon points="594.7,255.8 598.9,262.8 590.7,267.6 586.6,260.6" fill="#ffd500"/>
<polygon points="598.9,262.8 610.1,281.8 601.9,286.6 590.7,267.6" fill="#ffe88f"/>
<polygon points="611.3,283.8 613.1,286.8 604.9,291.6 603.1,288.6" fill="#ff1010"/>
<polygon points="613.1,286.8 616.9,293.3 608.7,298.1 604.9,291.6" fill="#800080"/>
<polygon points="616.9,293.3 620.7,299.8 612.6,304.6 608.7,298.1" fill="#ffd500"/>
<polygon points="626.7,309.8 629.0,313.8 620.8,318.6 618.5,314.6" fill="#ff1010"/>
<polygon points="630.8,316.8 633.2,320.8 625.0,325.6 622.6,321.6" fill="#ffe88f"/>
<polygon points="540.9,164.7 547.4,175.7 555.6,170.9 549.1,159.9" fill="#00dd00"/>
<polygon points="551.5,182.7 555.6,189.6 563.8,184.8 559.7,177.9" fill="#00dd00"/>
<polygon points="555.6,189.6 557.9,193.5 566.1,188.7 563.8,184.8" fill="#009900"/>
<polygon points="557.9,193.5 562.5,201.2 570.6,196.4 566.1,188.7" fill="#00dd00"/>
<polygon points="562.5,201.2 564.8,205.2 573.0,200.4 570.6,196.4" fill="#006600"/>
<polygon points="564.8,205.2 567.1,209.0 575.3,204.2 573.0,200.4" fill="#00dd00"/>
<polygon points="567.1,209.0 569.6,213.2 577.7,208.4 575.3,204.2" fill="#003300"/>
<polygon points="569.6,213.2 572.5,218.2 580.7,213.4 577.7,208.4" fill="#009900"/>
<polygon points="572.5,218.2 579.6,230.2 587.8,225.4 580.7,213.4" fill="#006600"/>
<polygon points="579.6,230.2 582.0,234.2 590.2,229.4 587.8,225.4" fill="#003300"/>
<polygon points="583.7,237.2 589.1,246.2 597.2,241.4 591.9,232.4" fill="#00dd00"/>
<polygon points="594.4,255.2 596.7,259.2 604.9,254.4 602.6,250.4" fill="#00dd00"/>
<polygon points="598.5,262.2 622.2,302.2 630.3,297.4 606.7,257.4" fill="#006600"/>
<polygon points="620.7,299.7 624.8,306.7 633.0,301.9 628.9,294.9" fill="#00dd00"/>
<polyline points="540.9,164.7 635.4,324.6" fill="none" stroke="#222" stroke-width="0.8"/>
<text x="0" y="0" font-size="7" transform="translate(538.3,152.7) rotate(-44)">MQ17-025</text>
<rect x="21" y="20" width="984.5" height="735" fill="none" stroke="#aaa" stroke-width="1.5"/>
<rect x="6" y="6" width="1013" height="763" fill="none" stroke="#000" stroke-width="2"/>
<svg x="7" y="7" width="1011" height="761" overflow="hidden">
<text x="7.4" y="10" font-size="8.5" text-anchor="middle" fill="#222">7,083,750N</text>
<text x="105.0" y="10" font-size="8.5" text-anchor="middle" fill="#222">7,083,800N</text>
<text x="105.0" y="756.7" font-size="8.5" text-anchor="middle" fill="#222">7,083,800N</text>
<text x="202.7" y="10" font-size="8.5" text-anchor="middle" fill="#222">7,083,850N</text>
<text x="202.7" y="756.7" font-size="8.5" text-anchor="middle" fill="#222">7,083,850N</text>
<text x="300.3" y="10" font-size="8.5" text-anchor="middle" fill="#222">7,083,900N</text>
<text x="300.3" y="756.7" font-size="8.5" text-anchor="middle" fill="#222">7,083,900N</text>
<text x="398.0" y="10" font-size="8.5" text-anchor="middle" fill="#222">7,083,950N</text>
<text x="398.0" y="756.7" font-size="8.5" text-anchor="middle" fill="#222">7,083,950N</text>
<text x="495.6" y="10" font-size="8.5" text-anchor="middle" fill="#222">7,084,000N</text>
<text x="495.6" y="756.7" font-size="8.5" text-anchor="middle" fill="#222">7,084,000N</text>
<text x="593.2" y="10" font-size="8.5" text-anchor="middle" fill="#222">7,084,050N</text>
<text x="593.2" y="756.7" font-size="8.5" text-anchor="middle" fill="#222">7,084,050N</text>
<text x="690.9" y="10" font-size="8.5" text-anchor="middle" fill="#222">7,084,100N</text>
<text x="690.9" y="756.7" font-size="8.5" text-anchor="middle" fill="#222">7,084,100N</text>
<text x="788.5" y="10" font-size="8.5" text-anchor="middle" fill="#222">7,084,150N</text>
<text x="788.5" y="756.7" font-size="8.5" text-anchor="middle" fill="#222">7,084,150N</text>
<text x="886.2" y="10" font-size="8.5" text-anchor="middle" fill="#222">7,084,200N</text>
<text x="983.8" y="10" font-size="8.5" text-anchor="middle" fill="#222">7,084,250N</text>
</svg>
<text x="0" y="0" font-size="8.5" text-anchor="middle" fill="#222" transform="translate(18.3,195.3) rotate(-90)">750m</text>
<text x="0" y="0" font-size="8.5" text-anchor="middle" fill="#222" transform="translate(1008.8,189.7) rotate(90)">750m</text>
<text x="0" y="0" font-size="8.5" text-anchor="middle" fill="#222" transform="translate(18.3,293.0) rotate(-90)">700m</text>
<text x="0" y="0" font-size="8.5" text-anchor="middle" fill="#222" transform="translate(1008.8,287.4) rotate(90)">700m</text>
<text x="0" y="0" font-size="8.5" text-anchor="middle" fill="#222" transform="translate(18.3,390.7) rotate(-90)">650m</text>
<text x="0" y="0" font-size="8.5" text-anchor="middle" fill="#222" transform="translate(1008.8,385.1) rotate(90)">650m</text>
<text x="0" y="0" font-size="8.5" text-anchor="middle" fill="#222" transform="translate(18.3,488.4) rotate(-90)">600m</text>
<text x="0" y="0" font-size="8.5" text-anchor="middle" fill="#222" transform="translate(1008.8,482.8) rotate(90)">600m</text>
<text x="0" y="0" font-size="8.5" text-anchor="middle" fill="#222" transform="translate(18.3,586.1) rotate(-90)">550m</text>
<text x="0" y="0" font-size="8.5" text-anchor="middle" fill="#222" transform="translate(1008.8,580.5) rotate(90)">550m</text>
<text x="0" y="0" font-size="8.5" text-anchor="middle" fill="#222" transform="translate(18.3,683.8) rotate(-90)">500m</text>
<rect x="796.5" y="24" width="205" height="272.5" fill="#fff" stroke="#000" stroke-width="2"/>
<line x1="796.5" y1="177" x2="1001.5" y2="177" stroke="#000" stroke-width="2"/>
<text x="798.6" y="39" font-size="13.5">Assay Legend</text>
<text x="798.6" y="55.3" font-size="13.5">Au (ppm)</text>
<text x="901.5" y="55.3" font-size="13.5">Ca (percent)</text>
<rect x="800" y="61.2" width="44" height="19.6" fill="#e2e2f6" stroke="#e8e8e8" stroke-width="0.8"/>
<rect x="902" y="61.2" width="44" height="19.6" fill="#dadaf4" stroke="#e8e8e8" stroke-width="0.8"/>
<text x="851.5" y="75.7" font-size="11">&lt;0.1</text>
<text x="954.6" y="75.7" font-size="11">&lt;0.9</text>
<rect x="800" y="84.0" width="44" height="19.6" fill="#ffe88f" stroke="#e8e8e8" stroke-width="0.8"/>
<rect x="902" y="84.0" width="44" height="19.6" fill="#00dd00" stroke="#e8e8e8" stroke-width="0.8"/>
<text x="851.5" y="98.5" font-size="11">0.1 - 0.2</text>
<text x="954.6" y="98.5" font-size="11">0.9 - 1.8</text>
<rect x="800" y="106.7" width="44" height="19.6" fill="#ffd500" stroke="#e8e8e8" stroke-width="0.8"/>
<rect x="902" y="106.7" width="44" height="19.6" fill="#009900" stroke="#e8e8e8" stroke-width="0.8"/>
<text x="851.5" y="121.2" font-size="11">0.2 - 0.4</text>
<text x="954.6" y="121.2" font-size="11">1.8 - 3.6</text>
<rect x="800" y="129.4" width="44" height="19.6" fill="#ff1010" stroke="#e8e8e8" stroke-width="0.8"/>
<rect x="902" y="129.4" width="44" height="19.6" fill="#006600" stroke="#e8e8e8" stroke-width="0.8"/>
<text x="851.5" y="143.9" font-size="11">0.4 - 0.8</text>
<text x="954.6" y="143.9" font-size="11">3.6 - 7.2</text>
<rect x="800" y="152.2" width="44" height="19.6" fill="#800080" stroke="#e8e8e8" stroke-width="0.8"/>
<rect x="902" y="152.2" width="44" height="19.6" fill="#003300" stroke="#e8e8e8" stroke-width="0.8"/>
<text x="851.5" y="166.7" font-size="11">&gt;0.8</text>
<text x="954.6" y="166.7" font-size="11">&gt;7.2</text>
<text x="798.6" y="192.6" font-size="13.5">Simplified Geology</text>
<rect x="800" y="199" width="44" height="19.8" fill="#fdcbfc" stroke="#e8e8e8" stroke-width="0.8"/>
<rect x="800" y="222.4" width="44" height="19.8" fill="#527ca8" stroke="#e8e8e8" stroke-width="0.8"/>
<rect x="800" y="245.8" width="44" height="19.8" fill="#ff9932" stroke="#e8e8e8" stroke-width="0.8"/>
<rect x="800" y="271.3" width="44" height="19.8" fill="#bfbfbf" stroke="#e8e8e8" stroke-width="0.8"/>
<text x="851.5" y="213.4" font-size="11">Quartz-Feldspar Dyke</text>
<text x="851.5" y="235.5" font-size="11">Quartzite</text>
<text x="851.5" y="253.9" font-size="11">Mixed Assemblage</text>
<text x="851.5" y="265.3" font-size="11">(Calcareous)</text>
<text x="851.5" y="279.1" font-size="11">Mixed Assemblage</text>
<text x="851.5" y="291" font-size="11">(Non-Calcareous)</text>
<rect x="823.5" y="611.5" width="195" height="156.5" fill="#fff" stroke="#000" stroke-width="1.5"/>
<line x1="823" y1="643.5" x2="1019" y2="643.5" stroke="#000" stroke-width="2"/>
<line x1="823" y1="729" x2="1019" y2="729" stroke="#000" stroke-width="2"/>
<line x1="868.3" y1="644" x2="868.3" y2="728" stroke="#555" stroke-width="0.9"/>
<line x1="823" y1="662.5" x2="869" y2="662.5" stroke="#777" stroke-width="0.8"/>
<line x1="823" y1="676.4" x2="869" y2="676.4" stroke="#777" stroke-width="0.8"/>
<line x1="823" y1="689.5" x2="869" y2="689.5" stroke="#777" stroke-width="0.8"/>
<line x1="823" y1="702.5" x2="869" y2="702.5" stroke="#777" stroke-width="0.8"/>
<line x1="823" y1="715.8" x2="1018" y2="715.8" stroke="#999" stroke-width="0.8"/>
<path d="M850.2,618.3 Q852.5,629 862.9,634.6 L850.2,634.6 Z" fill="#e08a25"/>
<text x="863" y="634.8" font-size="15.9" font-weight="bold" fill="#505050">Banyan<tspan fill="#e0841f">Gold</tspan></text>
<line x1="864" y1="638.7" x2="963" y2="638.7" stroke="#aaa" stroke-width="1.4"/>
<line x1="957.2" y1="616" x2="957.2" y2="642" stroke="#555" stroke-width="0.6"/>
<text x="947.6" y="661.8" font-size="8.3" text-anchor="middle" fill="#222">Section - 466750E</text>
<text x="947.6" y="671.5" font-size="8.3" text-anchor="middle" fill="#222">Looking West</text>
<text x="827" y="673.2" font-size="4.2" fill="#111">Date: 2018-10-28</text>
<text x="827" y="686.0" font-size="4.2" fill="#111">Author: J.Thom</text>
<text x="827" y="699.2" font-size="4.2" fill="#111">Office: BYN</text>
<text x="827" y="712.3" font-size="4.2" fill="#111">Drawing: Section</text>
<text x="827" y="725.4" font-size="4.2" fill="#111">Scale: 1:2000</text>
<text x="871.8" y="725.4" font-size="4.2" fill="#111">Projection: Non-Earth (meters)</text>
<rect x="843.5" y="751.2" width="155.3" height="3.4" fill="#fff" stroke="#222" stroke-width="0.8"/>
<rect x="882.3" y="752.5" width="38.8" height="2.5" fill="#222"/>
<rect x="843.5" y="751.2" width="38.8" height="1.6" fill="#444"/>
<rect x="921.1" y="751.2" width="77.7" height="1.6" fill="#444"/>
<text x="843.3" y="748.3" font-size="5" text-anchor="middle" fill="#222">0</text>
<text x="882.1" y="748.3" font-size="5" text-anchor="middle" fill="#222">20</text>
<text x="921" y="748.3" font-size="5" text-anchor="middle" fill="#222">40</text>
<text x="998.8" y="748.3" font-size="5" text-anchor="middle" fill="#222">80</text>
<text x="917.5" y="762.3" font-size="5" text-anchor="middle" fill="#222">metres</text>
</svg></body></html>
